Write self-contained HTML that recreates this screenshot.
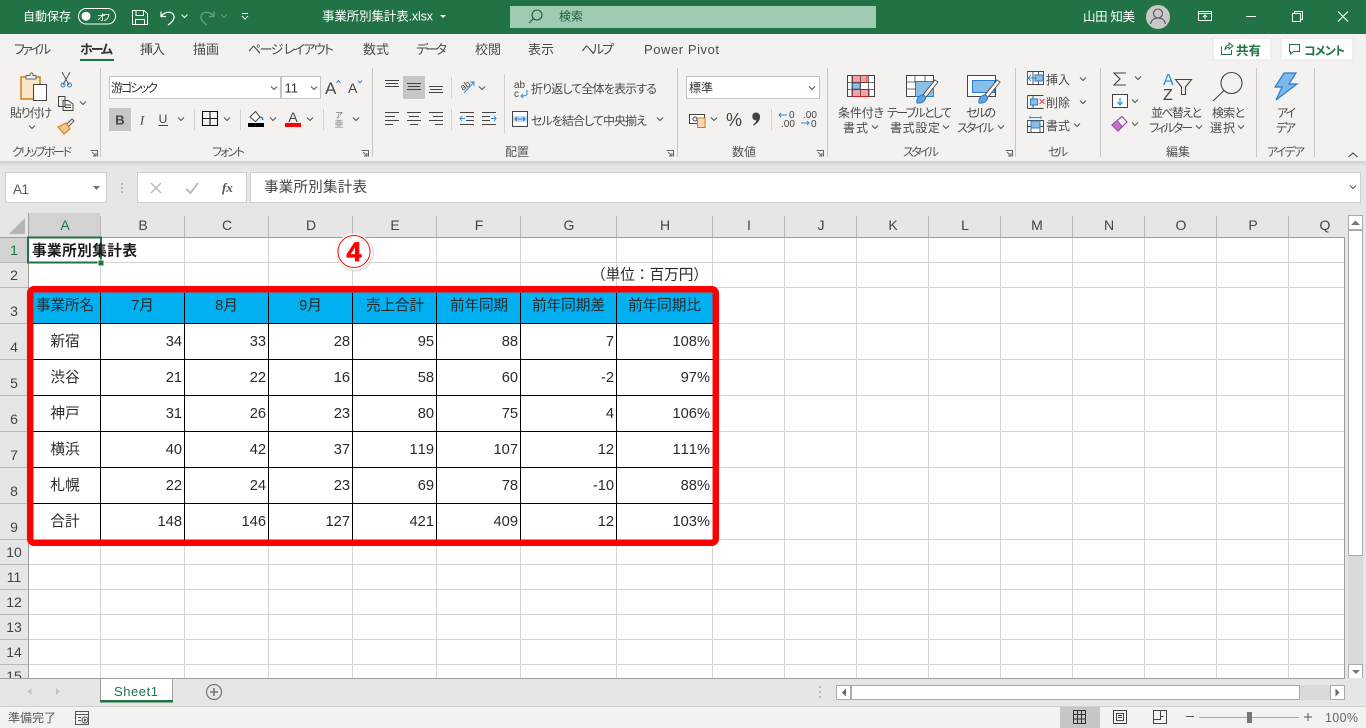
<!DOCTYPE html>
<html lang="ja"><head><meta charset="utf-8"><title>事業所別集計表.xlsx - Excel</title>
<style>
html,body{margin:0;padding:0;width:1366px;height:728px;overflow:hidden;background:#fff}
svg{display:block;position:absolute;left:0;top:0}
text{font-family:"Liberation Sans","Noto Sans CJK JP",sans-serif;fill:#4a4a4a;font-size:12px;font-feature-settings:"palt"}
.w{fill:#fff}
.c{fill:#2a2a2a;font-size:14.67px;font-feature-settings:normal;font-kerning:none}
.m{text-anchor:middle}
.e{text-anchor:end}
.h{fill:#444;font-size:14px;text-anchor:middle}
.tb{font-size:13px}
.ic{fill:none;stroke:#444;stroke-width:1}
.lb{font-size:12px;fill:#555}
</style></head><body>
<svg width="1366" height="728" viewBox="0 0 1366 728" xmlns="http://www.w3.org/2000/svg">
<defs>
<symbol id="v" overflow="visible"><path d="M-3,-1.5L0,1.5L3,-1.5" fill="none" stroke="#555" stroke-width="1.1"/></symbol>
<symbol id="l" overflow="visible"><path d="M0.5,0.5H7.5V6.5M2,2L6,6M6,3V6H3" fill="none" stroke="#666" stroke-width="1"/></symbol>
</defs>
<!-- backgrounds -->
<rect width="1366" height="728" fill="#fff"/>
<rect y="34" width="1366" height="127" fill="#f3f2f1"/>
<rect y="161" width="1366" height="52" fill="#e6e6e6"/>
<rect y="161" width="1366" height="2" fill="#d2d2d2"/>
<rect y="163" width="1366" height="2" fill="#dedede"/>
<rect width="1366" height="34" fill="#217346"/>

<!-- title bar -->
<text class="w" x="23" y="20.5" textLength="48" style="font-feature-settings:normal">自動保存</text>
<rect x="78.5" y="8.5" width="37" height="15.5" rx="7.7" fill="none" stroke="#fff"/>
<circle cx="86" cy="16.2" r="4.5" fill="#fff"/>
<text class="w" x="97" y="20.5" style="font-size:9px" textLength="13">オフ</text>
<path d="M132.5,10.5H144L147.5,13.5V24.5H132.5ZM136,10.5V15.5H143.5V10.5M135.5,24.5V19.5H144.5V24.5" fill="none" stroke="#fff"/>
<path d="M161,11.5V16.5H166M161.5,16C165,11 173,11 174,16C174.8,20 171,23 168,25" fill="none" stroke="#fff" stroke-width="1.2"/>
<path d="M181.5,14.5L184.5,17.5L187.5,14.5" fill="none" stroke="#fff"/>
<path d="M214,11.5V16.5H209M213.5,16C210,11 202,11 201,16C200.2,20 204,23 207,25" fill="none" stroke="#6ea287" stroke-width="1.2"/>
<path d="M221,14.5L224,17.5L227,14.5" fill="none" stroke="#6ea287"/>
<path d="M242,13.5H248M242,16L245,19L248,16" fill="none" stroke="#fff"/>
<text class="w" x="322" y="20.5" textLength="111" style="font-size:12.5px;font-feature-settings:normal">事業所別集計表.xlsx</text>
<path d="M440,15H446L443,18Z" fill="#fff"/>
<rect x="510" y="6" width="366" height="22" fill="#a0cbb3"/>
<circle cx="537" cy="15" r="5" fill="none" stroke="#1b5e3c" stroke-width="1.1"/>
<path d="M533.5,18.5L529,23" stroke="#1b5e3c" stroke-width="1.2"/>
<text x="559" y="20.5" textLength="24" style="fill:#1b5e3c">検索</text>
<text class="w" x="1083" y="21" textLength="52" style="font-size:12.5px;font-feature-settings:normal">山田 知美</text>
<circle cx="1158" cy="17" r="12" fill="#c9c9c9"/>
<circle cx="1158" cy="13.5" r="4.5" fill="none" stroke="#555" stroke-width="1.1"/>
<path d="M1150.5,24C1151.5,19.5 1154,18 1158,18C1162,18 1164.5,19.5 1165.5,24" fill="none" stroke="#555" stroke-width="1.1"/>
<path d="M1198.5,11.5H1211.5V20.5H1198.5ZM1198.5,13.5H1211.5M1205,19V15M1203,17L1205,15L1207,17" fill="none" stroke="#fff"/>
<path d="M1246,16.5H1256" stroke="#fff"/>
<path d="M1292.5,13.5H1300.5V21.5H1292.5ZM1294.5,13V11.5H1302.5V19.5H1301" fill="none" stroke="#fff"/>
<path d="M1338,11.5L1348,21.5M1348,11.5L1338,21.5" stroke="#fff" stroke-width="1.1"/>

<!-- tabs -->
<text class="tb" x="14" y="54" textLength="37">ファイル</text>
<text class="tb" x="80" y="54" textLength="33" font-weight="700" style="fill:#333">ホーム</text>
<rect x="80" y="59" width="34" height="2" fill="#217346"/>
<text class="tb" x="140" y="54" textLength="25">挿入</text>
<text class="tb" x="193" y="54" textLength="26">描画</text>
<text class="tb" x="248" y="54" textLength="86">ページ レイアウト</text>
<text class="tb" x="363" y="54" textLength="26">数式</text>
<text class="tb" x="416" y="54" textLength="31">データ</text>
<text class="tb" x="475" y="54" textLength="26">校閲</text>
<text class="tb" x="528" y="54" textLength="26">表示</text>
<text class="tb" x="581" y="54" textLength="33">ヘルプ</text>
<text class="tb" x="644" y="54" textLength="75">Power Pivot</text>
<rect x="1213" y="38" width="58" height="22" rx="1" fill="#fff" stroke="#e6e5e4"/>
<path d="M1221.5,46.5V54.5H1231.5V50M1225,50C1225,46.5 1227,45 1229,45V43L1233,46L1229,49V47C1227.5,47 1226,48 1225,50Z" fill="none" stroke="#217346"/>
<text x="1236" y="55" textLength="25" font-weight="700" style="fill:#217346;font-size:12.5px">共有</text>
<rect x="1281" y="38" width="72" height="22" rx="1" fill="#fff" stroke="#e6e5e4"/>
<path d="M1289.5,44.5H1299.5V51.5H1293.5L1290.5,54V51.5H1289.5Z" fill="none" stroke="#217346"/>
<text x="1304" y="55" textLength="41" font-weight="700" style="fill:#217346">コメント</text>

<!-- separators -->
<path d="M100.5,68V157M372.5,68V157M677.5,68V157M827.5,68V157M1015.5,68V157M1100.5,68V157M1256.5,68V157M1314.5,68V157" stroke="#c8c6c4"/>
<path d="M194.5,109V130M240.5,109V130M323.5,109V130M451.5,77V98M451.5,109V130M504.5,74V133M771.5,109V130" stroke="#d2d0ce"/>

<!-- clipboard -->
<path d="M21,77H40V99H21Z" fill="#fbe6c8" stroke="#d87b12" stroke-width="1.5"/>
<path d="M26,75.5H30C30,72 33,72 33,75.5H36V79H26Z" fill="#f3f2f1" stroke="#666"/>
<rect x="33.5" y="84.5" width="13" height="16" fill="#fff" stroke="#444"/>
<text x="10" y="117" textLength="42">貼り付け</text>
<use href="#v" x="32" y="127"/>
<path d="M62,72L69,85M70,72L63,85" fill="none" stroke="#555"/>
<circle cx="63" cy="85" r="2" fill="none" stroke="#2b7cd3"/><circle cx="69.5" cy="85" r="2" fill="none" stroke="#2b7cd3"/>
<path d="M58.5,96.5H65V106.5H58.5ZM63,100.5H68L73,104V110.5H63ZM65,105H71M65,107.5H71" fill="#f3f2f1" stroke="#444"/>
<use href="#v" x="83" y="103"/>
<path d="M66,125L72,119L74,121L68,127" fill="none" stroke="#555"/>
<path d="M58,127L66,123L70,129L64,134Z" fill="#f7c68a" stroke="#d87b12"/>
<text class="lb" x="12" y="156" textLength="60">クリップボード</text>
<use href="#l" x="90" y="150"/>

<!-- font -->
<rect x="109.500" y="76.500" width="171" height="22" fill="#fff" stroke="#c4c4c4"/>
<rect x="281.500" y="76.500" width="39" height="22" fill="#fff" stroke="#c4c4c4"/>
<text x="111" y="92" textLength="47" style="fill:#333">游ゴシック</text>
<use href="#v" x="274" y="88"/>
<text x="284.500" y="92.500" style="font-size:13px;fill:#333">11</text>
<use href="#v" x="314" y="88"/>
<text x="325" y="94" style="font-size:17px;fill:#444">A</text><path d="M336.500,83L338.500,80.500L340.500,83" fill="none" stroke="#2b7cd3"/>
<text x="348" y="93" style="font-size:14px;fill:#444">A</text><path d="M358,80.500L360,83L362,80.500" fill="none" stroke="#2b7cd3"/>
<rect x="109" y="108" width="22" height="23" fill="#c6c6c6"/>
<text class="m" x="120" y="124.500" font-weight="700" style="font-size:13px;fill:#444">B</text>
<text class="m" x="142" y="124.500" font-style="italic" style="font-size:13px;fill:#444;font-family:'Liberation Serif',serif">I</text>
<text class="m" x="163" y="123" style="font-size:12px;fill:#444">U</text><path d="M158.500,125.500H168" stroke="#444"/>
<use href="#v" x="181" y="119"/>
<path d="M202.500,111.500H217.500V125.500H202.500ZM210,111.500V125.500M202.500,118.500H217.500" fill="none" stroke="#111" stroke-width="1.1"/>
<use href="#v" x="227" y="119"/>
<path d="M250,117L255.500,111.500L260,117L255.500,121.500Z" fill="#fff" stroke="#444"/><path d="M260,117.500C262,117 263,118 262.500,120" fill="none" stroke="#2b7cd3" stroke-width="1.5"/>
<rect x="248" y="123" width="16" height="4" fill="#000"/>
<use href="#v" x="273" y="119"/>
<text class="m" x="293" y="122" style="font-size:14px;fill:#444">A</text>
<rect x="285" y="123" width="16" height="4" fill="#f00"/>
<use href="#v" x="310" y="119"/>
<text class="m" x="339" y="118" style="font-size:8px;fill:#666">ア</text>
<text class="m" x="339" y="127" style="font-size:9px;fill:#888">亜</text>
<use href="#v" x="356" y="119"/>
<text class="lb m" x="228.500" y="156" textLength="33">フォント</text>
<use href="#l" x="361" y="150"/>

<!-- alignment -->
<rect x="403" y="76" width="22" height="23" fill="#c6c6c6"/>
<path d="M385,80.500H399M386,83.500H398M385,86.500H399M407,83.500H421M408,86.500H420M407,89.500H421M429,86.500H443M430,89.500H442M429,92.500H443" stroke="#444"/>
<path d="M385,112.500H399M385,116.500H395M385,120.500H399M385,124.500H393M407,112.500H421M409,116.500H419M407,120.500H421M410,124.500H418M429,112.500H443M433,116.500H443M429,120.500H443M435,124.500H443" stroke="#444"/>
<text x="460" y="88" transform="rotate(-35 466 85)" style="font-size:9px;fill:#444">ab</text>
<path d="M464,93L474,82M470,82H474V86" fill="none" stroke="#2b8fd8"/>
<use href="#v" x="482" y="88"/>
<path d="M460,112.500H474M466,116.500H474M466,120.500H474M460,124.500H474M482,112.500H496M482,116.500H490M482,120.500H490M482,124.500H496" stroke="#444"/>
<path d="M465,118.500H460M462,116L460,118.500L462,121M491,118.500H496M494,116L496,118.500L494,121" fill="none" stroke="#2b8fd8"/>
<text x="514" y="88" style="font-size:10px;fill:#444">ab</text><text x="514" y="97" style="font-size:10px;fill:#444">c</text>
<path d="M527,90V93C527,96 524,96 521,96M523,94L521,96L523,98" fill="none" stroke="#2b8fd8"/>
<text x="531" y="93" textLength="126">折り返して全体を表示する</text>
<rect x="512.500" y="111.500" width="15" height="15" fill="#fff" stroke="#444"/>
<rect x="513" y="116" width="14" height="6" fill="#c9e0f3"/>
<path d="M515,119H525M517,117L515,119L517,121M523,117L525,119L523,121" fill="none" stroke="#2b7cd3"/>
<text x="531" y="125" textLength="116">セルを結合して中央揃え</text>
<use href="#v" x="660" y="119"/>
<text class="lb" x="505" y="156" textLength="24">配置</text>
<use href="#l" x="666" y="150"/>

<!-- number -->
<rect x="686.500" y="76.500" width="133" height="22" fill="#fff" stroke="#c4c4c4"/>
<text x="689" y="92" textLength="24" style="fill:#333">標準</text>
<use href="#v" x="812" y="88"/>
<rect x="689.500" y="114.500" width="15" height="9" fill="#fff" stroke="#444"/>
<circle cx="695" cy="119" r="2" fill="none" stroke="#444"/>
<rect x="697.500" y="118" width="7.500" height="9.500" fill="#f7d8b0" stroke="#d87b12"/>
<use href="#v" x="714" y="119"/>
<text x="726" y="126" style="font-size:18px;fill:#444" textLength="16">%</text>
<path d="M756,112.500C759,112.500 760.500,115 760,118C759.500,121 757,124 753.500,125.500L753,124.500C755,123.300 756,122 756.300,120.300C753.800,120.500 752.300,118.800 752.300,116.500C752.300,114.200 753.800,112.500 756,112.500Z" fill="#444"/>
<text x="789" y="118" style="font-size:10px;fill:#444">0</text><text x="781" y="127" style="font-size:10px;fill:#444">.00</text>
<path d="M779,115H787M781,113L779,115L781,117" fill="none" stroke="#2b8fd8"/>
<text x="803" y="118" style="font-size:10px;fill:#444">.00</text><text x="811" y="127" style="font-size:10px;fill:#444">0</text>
<path d="M801,123H809M807,121L809,123L807,125" fill="none" stroke="#2b8fd8"/>
<text class="lb" x="732" y="156" textLength="24">数値</text>
<use href="#l" x="816" y="150"/>

<!-- styles -->
<rect x="847.500" y="75.500" width="27" height="21" fill="#fff" stroke="#444"/>
<rect x="852" y="75.500" width="15" height="7" fill="#f8a0a0" stroke="#e01b24"/>
<rect x="852" y="89.500" width="17" height="7" fill="#f8a0a0" stroke="#e01b24"/>
<rect x="852" y="83" width="8" height="6" fill="#8abfe8" stroke="#2b7cd3"/>
<path d="M852.500,75.500V96.500M860.500,75.500V96.500M868.500,75.500V96.500M847.500,82.500H874.500M847.500,89.500H874.500" fill="none" stroke="#444" stroke-width=".8"/>
<text x="838" y="117" textLength="46">条件付き</text>
<text x="843" y="132" textLength="25">書式</text><use href="#v" x="875" y="127"/>
<rect x="906.500" y="75.500" width="27" height="21" fill="#fff" stroke="#444"/>
<rect x="915.500" y="81.500" width="18" height="15" fill="#8abfe8" stroke="#2b7cd3"/>
<path d="M906.500,82H916M906.500,89H916M915,75.500V82M925,75.500V82" stroke="#444" stroke-width=".8"/>
<path d="M922,96L935,80L938,82L926,97Z" fill="#fff" stroke="#555"/>
<path d="M917,103C916,98 921,93 925,96C927,100 922,104 917,103Z" fill="#5fa4dc" stroke="#2b7cd3"/>
<text x="887" y="117" textLength="65">テーブルとして</text>
<text x="890" y="132" textLength="50">書式設定</text><use href="#v" x="946" y="127"/>
<rect x="967.500" y="75.500" width="28" height="21" fill="#fff" stroke="#444"/>
<rect x="972.500" y="80.500" width="22" height="12" fill="#8abfe8" stroke="#2b7cd3"/>
<path d="M984,96L997,80L1000,82L988,97Z" fill="#fff" stroke="#555"/>
<path d="M979,103C978,98 983,93 987,96C989,100 984,104 979,103Z" fill="#5fa4dc" stroke="#2b7cd3"/>
<text x="966" y="117" textLength="30">セルの</text>
<text x="957" y="132" textLength="37">スタイル</text><use href="#v" x="1001" y="127"/>
<text class="lb" x="903" y="156" textLength="36">スタイル</text>
<use href="#l" x="1005" y="150"/>

<!-- cells -->
<path d="M1027.500,71.500H1043.500V84.500H1027.500ZM1027.500,78H1043.500M1033,71.500V84.500M1038.500,71.500V84.500" fill="#fff" stroke="#444" stroke-width=".9"/>
<rect x="1035" y="75" width="8" height="6" fill="#8abfe8" stroke="#2b7cd3"/>
<path d="M1037,78H1028M1031,75L1028,78L1031,81" fill="none" stroke="#2b8fd8"/>
<text x="1046" y="84" textLength="24">挿入</text><use href="#v" x="1083" y="79"/>
<path d="M1027.500,95.500H1043.500M1027.500,108.500H1043.500M1033,95.500V99M1033,105V108.500M1027.500,95.500V108.500" fill="none" stroke="#444" stroke-width=".9"/>
<rect x="1030.500" y="99" width="7" height="6" fill="#8abfe8" stroke="#2b7cd3"/>
<path d="M1039.500,99L1044.500,104M1044.500,99L1039.500,104" stroke="#e04848"/>
<text x="1046" y="107" textLength="24">削除</text><use href="#v" x="1083" y="102"/>
<path d="M1027.500,120.500H1043.500V132.500H1027.500ZM1027.500,126.500H1043.500M1031,120.500V132.500M1040,120.500V132.500" fill="#fff" stroke="#444" stroke-width=".9"/>
<rect x="1031" y="121" width="9" height="7" fill="#8abfe8" stroke="#2b7cd3"/>
<path d="M1030,117.500H1041M1030,116V119M1041,116V119" stroke="#2b8fd8"/>
<text x="1046" y="130" textLength="24">書式</text><use href="#v" x="1077" y="125"/>
<!-- editing -->
<path d="M1126,73H1114L1120,79L1114,85H1126" fill="none" stroke="#444" stroke-width="1.1"/>
<use href="#v" x="1138" y="78"/>
<rect x="1112.500" y="94.500" width="15" height="13" fill="#fff" stroke="#444"/>
<path d="M1120,98V104M1117.500,102L1120,105L1122.500,102" fill="none" stroke="#2b8fd8" stroke-width="1.2"/>
<use href="#v" x="1135" y="101"/>
<path d="M1112,125L1122,116.500L1127,122L1118,131Z" fill="#fff" stroke="#a14dac" stroke-width="1.2"/>
<path d="M1112,125L1117,120.500L1122,126L1118,131Z" fill="#c472cc" stroke="#a14dac"/>
<use href="#v" x="1135" y="124"/>
<text x="1163" y="85" style="font-size:16px;fill:#2b8fd8">A</text>
<text x="1163" y="100" style="font-size:16px;fill:#444">Z</text>
<path d="M1175.500,79.500H1191.500L1185.500,87V94.500H1181.500V87Z" fill="none" stroke="#444" stroke-width="1.1"/>
<text x="1151" y="117" textLength="51">並べ替えと</text>
<text x="1149" y="132" textLength="44">フィルター</text><use href="#v" x="1199" y="127"/>
<circle cx="1231.500" cy="83" r="10.500" fill="none" stroke="#444" stroke-width="1.1"/>
<path d="M1224,90.500L1213,101" stroke="#444" stroke-width="1.1"/>
<text x="1212" y="117" textLength="33">検索と</text>
<text x="1210" y="132" textLength="25">選択</text><use href="#v" x="1241" y="127"/>
<text class="lb" x="1166" y="156" textLength="24">編集</text>
<text class="lb" x="1048" y="156" textLength="20">セル</text>
<!-- ideas -->
<path d="M1284,73H1296L1289,84H1297L1276,100L1282,87H1275Z" fill="#7cb8e8" stroke="#2b7cd3" stroke-width="1.2"/>
<text x="1277" y="117" textLength="19">アイ</text>
<text x="1276" y="132" textLength="20">デア</text>
<text class="lb" x="1267" y="156" textLength="38">アイデア</text>
<path d="M1348.500,157L1353,153L1357.500,157" fill="none" stroke="#444" stroke-width="1.1"/>

<!-- formula bar -->
<rect x="5.500" y="172.500" width="101" height="30" fill="#fff" stroke="#d0d0d0"/>
<text x="13" y="194" textLength="16" style="font-size:13.500px;fill:#555">A1</text>
<path d="M93,186H100L96.500,190Z" fill="#777"/>
<path d="M122,183V185M122,187V189M122,191V193" stroke="#a8a8a8" stroke-width="1.500"/>
<rect x="137.500" y="172.500" width="109" height="30" fill="#fff" stroke="#d0d0d0"/>
<path d="M151,183L161,193M161,183L151,193" stroke="#bbb" stroke-width="1.500"/>
<path d="M186,189L190.500,193L198,183" fill="none" stroke="#bbb" stroke-width="2"/>
<text x="222" y="192" font-style="italic" font-weight="700" style="font-size:13px;fill:#555;font-family:'Liberation Serif',serif">fx</text>
<rect x="250.500" y="172.500" width="1110" height="30" fill="#fff" stroke="#d0d0d0"/>
<text x="264" y="192" textLength="103" style="font-size:14.500px;fill:#444;font-feature-settings:normal">事業所別集計表</text>
<use href="#v" x="1353" y="187"/>

<!-- grid headers -->
<rect x="0" y="213" width="1345" height="25" fill="#e6e6e6"/>
<rect x="0" y="238" width="28" height="440" fill="#e6e6e6"/>
<rect x="28" y="213" width="72" height="24" fill="#d2d2d2"/>
<rect x="0" y="238" width="28" height="24" fill="#d2d2d2"/>
<path d="M25,218V234H9Z" fill="#b4b4b4"/>
<path d="M28.500,213V678M0,237.500H1345" stroke="#9e9e9e"/>
<path d="M100.500,216V237M184.500,216V237M268.500,216V237M352.500,216V237M436.500,216V237M520.500,216V237M616.500,216V237M712.500,216V237M784.500,216V237M856.500,216V237M928.500,216V237M1000.500,216V237M1072.500,216V237M1144.500,216V237M1216.500,216V237M1288.500,216V237" stroke="#b8b8b8"/>
<path d="M0,262.500H28M0,287.500H28M0,323.500H28M0,359.500H28M0,395.500H28M0,431.500H28M0,467.500H28M0,503.500H28M0,539.500H28M0,564.500H28M0,589.500H28M0,614.500H28M0,639.500H28M0,664.500H28" stroke="#b8b8b8"/>
<text class="h" x="65" y="230" style="fill:#217346">A</text>
<text class="h" x="143" y="230">B</text><text class="h" x="227" y="230">C</text><text class="h" x="311" y="230">D</text><text class="h" x="395" y="230">E</text><text class="h" x="479" y="230">F</text><text class="h" x="569" y="230">G</text><text class="h" x="665" y="230">H</text><text class="h" x="749" y="230">I</text><text class="h" x="821" y="230">J</text><text class="h" x="893" y="230">K</text><text class="h" x="965" y="230">L</text><text class="h" x="1037" y="230">M</text><text class="h" x="1109" y="230">N</text><text class="h" x="1181" y="230">O</text><text class="h" x="1253" y="230">P</text><text class="h" x="1325" y="230">Q</text>
<g>
<text class="h" x="14" y="255" style="fill:#217346">1</text><text class="h" x="14" y="280">2</text><text class="h" x="14" y="316">3</text><text class="h" x="14" y="352">4</text><text class="h" x="14" y="388">5</text><text class="h" x="14" y="424">6</text><text class="h" x="14" y="460">7</text><text class="h" x="14" y="496">8</text><text class="h" x="14" y="532">9</text><text class="h" x="14" y="557">10</text><text class="h" x="14" y="582">11</text><text class="h" x="14" y="607">12</text><text class="h" x="14" y="632">13</text><text class="h" x="14" y="657">14</text><text class="h" x="14" y="681">15</text>
</g>

<!-- gridlines -->
<path d="M100.500,238V678M184.500,238V678M268.500,238V678M352.500,238V678M436.500,238V678M520.500,238V678M616.500,238V678M712.500,238V678M784.500,238V678M856.500,238V678M928.500,238V678M1000.500,238V678M1072.500,238V678M1144.500,238V678M1216.500,238V678M1288.500,238V678" stroke="#d4d4d4"/>
<path d="M29,262.500H1345M29,287.500H1345M29,323.500H1345M29,359.500H1345M29,395.500H1345M29,431.500H1345M29,467.500H1345M29,503.500H1345M29,539.500H1345M29,564.500H1345M29,589.500H1345M29,614.500H1345M29,639.500H1345M29,664.500H1345" stroke="#d4d4d4"/>

<!-- table -->
<rect x="33" y="292" width="680" height="248" fill="#fff"/>
<rect x="33" y="292" width="680" height="31" fill="#00b0f0"/>
<path d="M100.500,293V540M184.500,293V540M268.500,293V540M352.500,293V540M436.500,293V540M520.500,293V540M616.500,293V540M33,323.500H713M33,359.500H713M33,395.500H713M33,431.500H713M33,467.500H713M33,503.500H713" stroke="#000"/>
<rect x="30.200" y="289.200" width="685.600" height="253.600" rx="4" fill="none" stroke="#f00" stroke-width="6.500"/>

<!-- selection + text -->
<rect x="28" y="237.500" width="73" height="25" fill="none" stroke="#217346" stroke-width="2"/>
<text x="32" y="255.300" textLength="105" font-weight="700" style="font-size:14.67px;fill:#1a1a1a;font-feature-settings:normal">事業所別集計表</text>
<rect x="98" y="260" width="6" height="6" fill="#217346" stroke="#fff"/>
<text x="591" y="279.500" textLength="117" class="c">（単位：百万円）</text>

<g class="hdr">
<text class="c" x="36" y="310" textLength="58">事業所名</text>
<text class="c m" x="142.500" y="310">7月</text><text class="c m" x="226.500" y="310">8月</text><text class="c m" x="310.500" y="310">9月</text>
<text class="c" x="366" y="310" textLength="58">売上合計</text>
<text class="c" x="450" y="310" textLength="58">前年同期</text>
<text class="c" x="532" y="310" textLength="73">前年同期差</text>
<text class="c" x="628" y="310" textLength="73">前年同期比</text>
</g>
<text class="c m" x="65" y="346">新宿</text><text class="c m" x="65" y="382">渋谷</text><text class="c m" x="65" y="418">神戸</text><text class="c m" x="65" y="454">横浜</text><text class="c m" x="65" y="490">札幌</text><text class="c m" x="65" y="526">合計</text>

<text class="c e" x="182" y="346">34</text><text class="c e" x="266" y="346">33</text><text class="c e" x="350" y="346">28</text><text class="c e" x="434" y="346">95</text><text class="c e" x="518" y="346">88</text><text class="c e" x="614" y="346">7</text><text class="c e" x="710" y="346">108%</text>
<text class="c e" x="182" y="382">21</text><text class="c e" x="266" y="382">22</text><text class="c e" x="350" y="382">16</text><text class="c e" x="434" y="382">58</text><text class="c e" x="518" y="382">60</text><text class="c e" x="614" y="382">-2</text><text class="c e" x="710" y="382">97%</text>
<text class="c e" x="182" y="418">31</text><text class="c e" x="266" y="418">26</text><text class="c e" x="350" y="418">23</text><text class="c e" x="434" y="418">80</text><text class="c e" x="518" y="418">75</text><text class="c e" x="614" y="418">4</text><text class="c e" x="710" y="418">106%</text>
<text class="c e" x="182" y="454">40</text><text class="c e" x="266" y="454">42</text><text class="c e" x="350" y="454">37</text><text class="c e" x="434" y="454">119</text><text class="c e" x="518" y="454">107</text><text class="c e" x="614" y="454">12</text><text class="c e" x="710" y="454">111%</text>
<text class="c e" x="182" y="490">22</text><text class="c e" x="266" y="490">24</text><text class="c e" x="350" y="490">23</text><text class="c e" x="434" y="490">69</text><text class="c e" x="518" y="490">78</text><text class="c e" x="614" y="490">-10</text><text class="c e" x="710" y="490">88%</text>
<text class="c e" x="182" y="526">148</text><text class="c e" x="266" y="526">146</text><text class="c e" x="350" y="526">127</text><text class="c e" x="434" y="526">421</text><text class="c e" x="518" y="526">409</text><text class="c e" x="614" y="526">12</text><text class="c e" x="710" y="526">103%</text>

<!-- callout -->
<circle cx="355" cy="253" r="19" fill="#bbb" opacity=".35"/>
<circle cx="354" cy="251.500" r="18" fill="#fff"/>
<circle cx="354" cy="251.500" r="16" fill="#fff" stroke="#f00" stroke-width="1"/>
<text class="m" x="354" y="261" font-weight="700" style="font-size:27px;fill:#f00;stroke:#f00;stroke-width:.8px">4</text>

<!-- scrollbar -->
<rect x="1345" y="213" width="21" height="465" fill="#e6e6e6"/>
<path d="M1344.500,238V678" stroke="#9e9e9e"/>
<rect x="1348" y="230" width="15" height="434" fill="#d9d9d9"/>
<rect x="1348.500" y="215.500" width="14" height="14" fill="#fff" stroke="#ababab"/>
<path d="M1351,225H1360L1355.500,220.500Z" fill="#777"/>
<rect x="1348.500" y="230.500" width="14" height="325" fill="#fff" stroke="#ababab"/>
<rect x="1348.500" y="664.500" width="14" height="14" fill="#fff" stroke="#ababab"/>
<path d="M1352,670H1360L1356,674Z" fill="#777"/>

<!-- sheet tabs -->
<rect x="0" y="678" width="1366" height="28" fill="#e6e6e6"/>
<path d="M0,678.500H100M173,678.500H1345" stroke="#9e9e9e"/>
<path d="M31.500,688L27.500,691.500L31.500,695Z" fill="#c4c4c4"/>
<path d="M56,688L60,691.500L56,695Z" fill="#c4c4c4"/>
<rect x="100.500" y="678.500" width="72" height="23" fill="#fff" stroke="#9e9e9e"/>
<rect x="100" y="700" width="73" height="2.500" fill="#217346"/>
<text class="m" x="136" y="696" textLength="44" style="font-size:13px;fill:#217346">Sheet1</text>
<circle cx="214" cy="692" r="7.500" fill="none" stroke="#777" stroke-width="1.200"/>
<path d="M210,692H218M214,688V696" stroke="#777" stroke-width="1.600"/>
<path d="M820,686V688M820,691V693M820,696V698" stroke="#a8a8a8" stroke-width="1.500"/>
<rect x="836.500" y="685.500" width="508" height="14" fill="#d9d9d9" stroke="#d9d9d9"/>
<rect x="836.500" y="685.500" width="14" height="14" fill="#fff" stroke="#ababab"/>
<path d="M846,688.500L842,692.500L846,696.500Z" fill="#666"/>
<rect x="851.500" y="685.500" width="448" height="14" fill="#fff" stroke="#ababab"/>
<rect x="1330.500" y="685.500" width="14" height="14" fill="#fff" stroke="#ababab"/>
<path d="M1335.500,688.500L1339.500,692.500L1335.500,696.500Z" fill="#666"/>

<!-- status bar -->
<rect x="0" y="706" width="1366" height="22" fill="#f3f2f1"/>
<rect x="0" y="706" width="1366" height="1" fill="#d2d0ce"/>
<text x="8" y="722" textLength="48" style="fill:#555;font-feature-settings:normal">準備完了</text>
<path d="M75.500,711.500H88.500V724.500H75.500ZM75.500,714.500H88.500M78,717.500H81M78,720.500H81" fill="none" stroke="#555"/>
<circle cx="85" cy="720" r="3" fill="#f3f2f1" stroke="#555"/><circle cx="85" cy="720" r="1.300" fill="#555"/>
<rect x="1060" y="707" width="40" height="21" fill="#c6c6c6"/>
<path d="M1073.500,710.500H1085.500V723.500H1073.500ZM1077.500,710.500V723.500M1081.500,710.500V723.500M1073.500,714.500H1085.500M1073.500,719H1085.500" fill="none" stroke="#333"/>
<path d="M1113.500,710.500H1126.500V723.500H1113.500ZM1116.500,713.500H1123.500V720.500H1116.500ZM1118,715.500H1122M1118,717.500H1122" fill="none" stroke="#444"/>
<path d="M1153.500,710.500H1166.500V723.500H1153.500ZM1153.500,719.500H1160.500V710.500M1160.500,716.500H1163.500" fill="none" stroke="#444"/>
<path d="M1186,716.500H1194M1304,717H1312M1308,713V721" stroke="#555"/>
<path d="M1199,717.500H1299" stroke="#aaa"/>
<rect x="1247" y="712" width="5" height="11" fill="#777"/>
<text x="1325" y="722" textLength="33" style="fill:#666;font-size:12.500px">100%</text>
</svg>
</body></html>
